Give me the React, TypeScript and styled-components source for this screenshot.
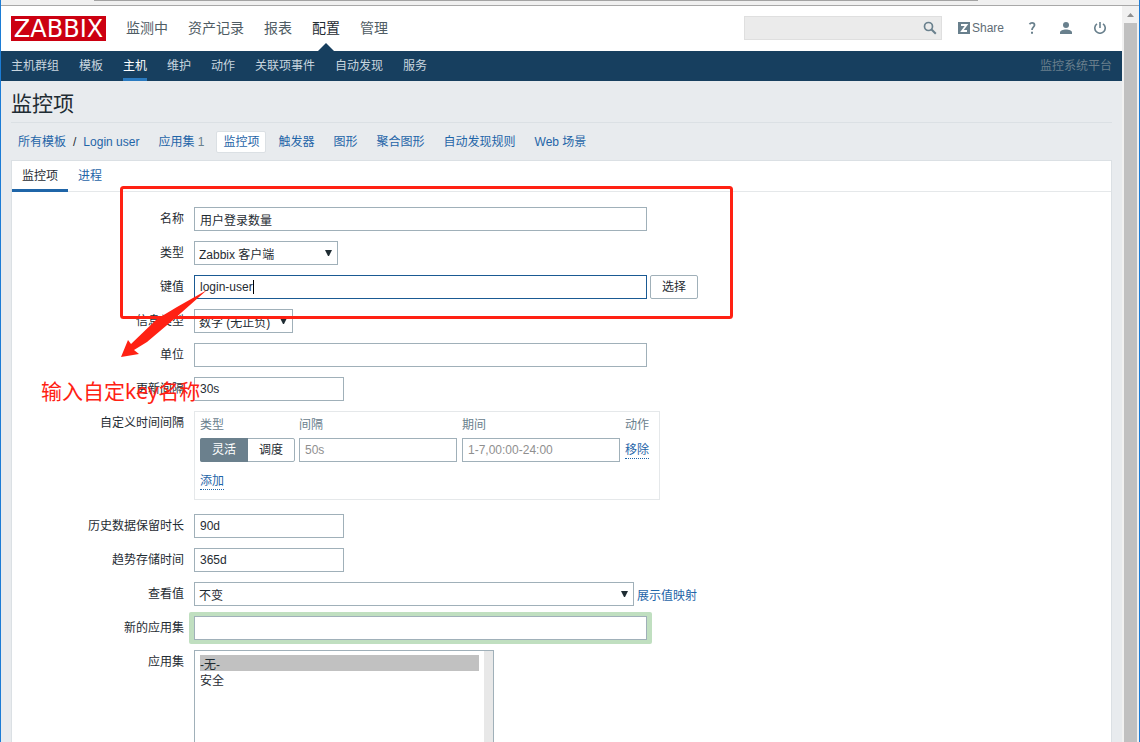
import React from 'react';
import styled, { createGlobalStyle, css } from 'styled-components';

const sans = `'Liberation Sans', 'Noto Sans CJK SC', sans-serif`;
const link = '#1f65a8';
const ink = '#1f2c33';
const muted = '#69808d';
const edge = '#a0b0b9';

const GlobalStyle = createGlobalStyle`
  *, *::before, *::after { box-sizing: border-box; }
  body { margin: 0; overflow: hidden; font: 12px/16px ${sans}; color: ${ink}; }
  input, select, button { font: inherit; color: inherit; }
  a { color: ${link}; text-decoration: none; }
`;

const Window = styled.div`
  position: relative;
  display: flex;
  flex-direction: column;
  height: 100vh;
  overflow: hidden;
  border: solid #1c7cd5;
  border-width: 0 1px;
  background: #e8ebee;
`;

const Chrome = styled.div`
  flex: none;
  height: 6px;
  padding: 0 161px 0 93px;
  background: #f0f0f0;
  border-bottom: 1px solid #a8a8a8;
  &::before { content: ''; display: block; height: 1px; background: #a3a3a3; }
`;

const Viewport = styled.div`
  display: flex;
  flex: 1;
  min-height: 0;
`;

const Page = styled.div`
  flex: 1;
  min-width: 0;
  overflow: hidden;
`;

const Scrollbar = styled.div`
  flex: none;
  display: flex;
  flex-direction: column;
  width: 17px;
  padding: 0 2px;
  background: #f1f1f1;
  svg { display: block; flex: none; margin: 6px 3px 5px; }
  &::after { content: ''; flex: 1; background: #c0c0c0; }
`;

const Header = styled.header`
  display: flex;
  align-items: flex-start;
  height: 45px;
  padding: 10px 16px 0 10px;
  background: #fff;
`;

const Logo = styled.a`
  width: 95px;
  height: 25px;
  background: #cc0011;
  color: #fff;
  font: 24px/27px 'DejaVu Sans', sans-serif;
  text-align: center;
`;

const MainMenu = styled.nav`
  display: flex;
  gap: 20px;
  height: 35px;
  margin-left: 20px;
  font-size: 14px;
  line-height: 25px;
`;

const MainLink = styled.a<{ $active?: boolean }>`
  position: relative;
  color: ${p => (p.$active ? ink : '#4f5c64')};
  ${p => p.$active && css`
    &::after {
      content: '';
      position: absolute;
      left: 50%;
      bottom: 0;
      margin-left: -8px;
      border: solid transparent;
      border-width: 0 8px 8px;
      border-bottom-color: #173f5f;
    }
  `}
`;

const Search = styled.form`
  display: flex;
  align-items: center;
  width: 198px;
  height: 24px;
  margin-left: auto;
  padding-right: 4px;
  background: #ebebeb;
  border: 1px solid #dfdfdf;
  input { flex: 1; min-width: 0; border: 0; background: none; outline: 0; }
`;

const IconButton = styled.button`
  display: block;
  padding: 0;
  border: 0;
  background: none;
  color: ${muted};
  svg { display: block; }
`;

const Tools = styled.div`
  display: flex;
  align-items: center;
  gap: 22px;
  height: 24px;
  margin-left: 16px;
`;

const Share = styled.a`
  display: flex;
  align-items: center;
  gap: 2px;
  color: #5f6d76;
`;

const SubMenu = styled.nav`
  display: flex;
  gap: 20px;
  height: 30px;
  padding: 0 10px;
  background: #173f5f;
  line-height: 31px;
`;

const SubLink = styled.a<{ $active?: boolean }>`
  height: 30px;
  color: ${p => (p.$active ? '#fff' : '#c9d6df')};
  border-bottom: 3px solid ${p => (p.$active ? '#2a7ac0' : 'transparent')};
`;

const ServerName = styled.span`
  margin-left: auto;
  color: #6a7f8d;
`;

const Main = styled.main`
  padding: 0 10px;
`;

const Title = styled.h1`
  margin: 0;
  padding: 8px 0 3px;
  border-bottom: 1px solid #dbe0e4;
  font-size: 21px;
  font-weight: 400;
  line-height: 30px;
`;

const Crumbs = styled.nav`
  display: flex;
  align-items: center;
  height: 37px;
  padding-left: 7px;
`;

const Slash = styled.span`
  padding: 0 7px;
`;

const Crumb = styled.a`
  margin-right: 19px;
`;

const ActiveCrumb = styled.a`
  margin: 0 12px 0 -7px;
  padding: 2px 6px;
  background: #fff;
  border: 1px solid #dbe0e4;
  border-radius: 2px;
`;

const Count = styled.sup`
  color: ${muted};
  font-size: 12px;
  line-height: 16px;
  vertical-align: baseline;
`;

const Panel = styled.section`
  background: #fff;
  border: 1px solid #dbe0e4;
`;

const Tabs = styled.div`
  display: flex;
  height: 31px;
  border-bottom: 1px solid #e5e8ea;
`;

const Tab = styled.a<{ $active?: boolean }>`
  height: 31px;
  padding: 0 10px;
  line-height: 31px;
  color: ${p => (p.$active ? ink : link)};
  border-bottom: 3px solid ${p => (p.$active ? '#1f65a8' : 'transparent')};
`;

const Form = styled.form`
  display: grid;
  gap: 10px;
  padding: 15px 0;
`;

const FieldRow = styled.div`
  display: grid;
  grid-template-columns: 172px 1fr;
  column-gap: 10px;
  align-items: start;
`;

const Label = styled.label`
  text-align: right;
  line-height: 24px;
`;

const Controls = styled.div`
  display: flex;
  align-items: center;
  gap: 3px;
`;

const SideLink = styled.a`
  padding-top: 3px;
`;

const TextBox = styled.input<{ $w: number; $focus?: boolean }>`
  display: block;
  width: ${p => p.$w}px;
  height: 24px;
  padding: 0 5px;
  border: 1px solid ${p => (p.$focus ? '#1a5a93' : edge)};
  border-radius: 0;
  background: #fff;
  outline: 0;
  &::placeholder { color: #8f8f8f; opacity: 1; }
`;

const KeyField = styled.div`
  position: relative;
`;

const Caret = styled.i`
  position: absolute;
  left: 59px;
  top: 5px;
  width: 1px;
  height: 14px;
  background: #000;
`;

const SelectBox = styled.div<{ $w: number }>`
  position: relative;
  width: ${p => p.$w}px;
  select {
    display: block;
    width: 100%;
    height: 24px;
    padding: 3px 20px 0 4px;
    appearance: none;
    border: 1px solid ${edge};
    border-radius: 0;
    background: #fff;
  }
  svg { position: absolute; right: 6px; top: 9px; pointer-events: none; }
`;

const Button = styled.button`
  width: 48px;
  height: 24px;
  padding: 0;
  border: 1px solid ${edge};
  border-radius: 2px;
  background: #fff;
`;

const IntervalBox = styled.div`
  width: 466px;
  height: 89px;
  margin-bottom: 4px;
  padding: 0 5px;
  border: 1px solid #e5e8ea;
`;

const IntervalTable = styled.table`
  border-collapse: collapse;
  table-layout: fixed;
  width: 100%;
  th, td { padding: 0; text-align: left; font-weight: 400; }
  th { height: 26px; color: ${muted}; }
  col:nth-child(1) { width: 99px; }
  col:nth-child(2), col:nth-child(3) { width: 163px; }
`;

const ActionLink = styled.a`
  display: inline-block;
  line-height: 15px;
  border-bottom: 1px dotted ${link};
`;

const AddRow = styled.div`
  padding-top: 11px;
`;

const Segments = styled.div`
  display: grid;
  grid-template-columns: 47px 46px;
  width: 95px;
  border: 1px solid ${edge};
  border-radius: 2px;
`;

const Segment = styled.label`
  line-height: 22px;
  text-align: center;
  input { position: absolute; opacity: 0; }
  &:has(input:checked) {
    margin: -1px 0 -1px -1px;
    line-height: 24px;
    border-radius: 2px 0 0 2px;
    background: #6b808d;
    color: #fff;
  }
`;

const Highlight = styled.div`
  margin: -4px -5px;
  padding: 4px 5px;
  border-radius: 2px;
  background: #c0dfc0;
`;

const ListBox = styled.select`
  width: 300px;
  height: 140px;
  padding: 4px 14px 4px 5px;
  border: 1px solid ${edge};
  border-radius: 0;
  overflow: hidden;
  outline: 0;
  background: linear-gradient(#e8e8e8, #e8e8e8) right / 9px 100% no-repeat #fff;
  option { height: 16px; min-height: 16px; padding: 0; line-height: 16px; }
  option:checked { background: linear-gradient(#c1c1c1, #c1c1c1); color: ${ink}; }
`;

const Markup = styled.svg`
  position: absolute;
  left: 0;
  top: 0;
  pointer-events: none;
`;

const Note = styled.p`
  position: absolute;
  left: 40px;
  top: 376px;
  margin: 0;
  color: #ff2113;
  font: 21px/30px 'Noto Sans', 'Noto Sans CJK SC', sans-serif;
`;

const mainMenu = ['监测中', '资产记录', '报表', '配置', '管理'];
const subMenu = ['主机群组', '模板', '主机', '维护', '动作', '关联项事件', '自动发现', '服务'];
const crumbs = ['触发器', '图形', '聚合图形', '自动发现规则', 'Web 场景'];

function Select({ id, width, value }: { id: string; width: number; value: string }) {
  return (
    <SelectBox $w={width}>
      <select id={id}><option>{value}</option></select>
      <svg width="7" height="6" aria-hidden="true"><path d="M0 0h7L4 6H3z" fill={ink} /></svg>
    </SelectBox>
  );
}

function Field({ id, label, children }: { id: string; label: string; children: React.ReactNode }) {
  return (
    <FieldRow>
      <Label htmlFor={id}>{label}</Label>
      <Controls>{children}</Controls>
    </FieldRow>
  );
}

export default function App() {
  return (
    <Window>
      <GlobalStyle />
      <Chrome />
      <Viewport>
        <Page>
          <Header>
            <Logo href="#">ZABBIX</Logo>
            <MainMenu>
              {mainMenu.map(t => <MainLink key={t} href="#" $active={t === '配置'}>{t}</MainLink>)}
            </MainMenu>
            <Search>
              <input type="text" aria-label="搜索" />
              <IconButton type="button" aria-label="搜索">
                <svg width="14" height="14" viewBox="0 0 14 14" fill="none" stroke="currentColor">
                  <circle cx="5.500" cy="5.500" r="4" strokeWidth="1.700" />
                  <path d="M8.500 8.500l4.300 4.300" strokeWidth="2" />
                </svg>
              </IconButton>
            </Search>
            <Tools>
              <Share href="#">
                <svg width="12" height="12" viewBox="0 0 12 12" aria-hidden="true">
                  <path d="M0 0h12v12H0z" fill={muted} />
                  <path d="M3 3h5.500L4 9h5" fill="none" stroke="#fff" strokeWidth="1.800" />
                </svg>
                Share
              </Share>
              <IconButton aria-label="帮助">
                <svg width="12" height="14" viewBox="0 0 12 14" fill="none" stroke="currentColor" strokeWidth="1.800">
                  <path d="M3.500 3.200C4.200 2.200 5 1.900 6 1.900c1.600 0 2.500.8 2.500 2.200C8.500 6.200 6 6.300 6 9" />
                  <path d="M6 10.800v2" strokeWidth="2" />
                </svg>
              </IconButton>
              <IconButton aria-label="用户">
                <svg width="12" height="12" viewBox="0 0 12 12" fill="currentColor">
                  <circle cx="6" cy="3" r="3" />
                  <path d="M0 12v-1.500C0 8.500 3 7.500 6 7.500s6 1 6 3V12z" />
                </svg>
              </IconButton>
              <IconButton aria-label="退出">
                <svg width="12" height="12" viewBox="0 0 12 12" fill="none" stroke="currentColor" strokeWidth="1.600">
                  <path d="M3 1.800a5.200 5.200 0 1 0 6 0" />
                  <path d="M6 0v6" />
                </svg>
              </IconButton>
            </Tools>
          </Header>
          <SubMenu>
            {subMenu.map(t => <SubLink key={t} href="#" $active={t === '主机'}>{t}</SubLink>)}
            <ServerName>监控系统平台</ServerName>
          </SubMenu>
          <Main>
            <Title>监控项</Title>
            <Crumbs>
              <a href="#">所有模板</a>
              <Slash>/</Slash>
              <Crumb href="#">Login user</Crumb>
              <Crumb href="#">应用集 <Count>1</Count></Crumb>
              <ActiveCrumb href="#">监控项</ActiveCrumb>
              {crumbs.map(t => <Crumb key={t} href="#">{t}</Crumb>)}
            </Crumbs>
            <Panel>
              <Tabs>
                <Tab href="#" $active>监控项</Tab>
                <Tab href="#">进程</Tab>
              </Tabs>
              <Form>
                <Field id="name" label="名称">
                  <TextBox id="name" $w={453} defaultValue="用户登录数量" />
                </Field>
                <Field id="type" label="类型">
                  <Select id="type" width={144} value="Zabbix 客户端" />
                </Field>
                <Field id="key" label="键值">
                  <KeyField>
                    <TextBox id="key" $w={453} $focus defaultValue="login-user" />
                    <Caret />
                  </KeyField>
                  <Button type="button">选择</Button>
                </Field>
                <Field id="value-type" label="信息类型">
                  <Select id="value-type" width={99} value="数字 (无正负)" />
                </Field>
                <Field id="units" label="单位">
                  <TextBox id="units" $w={453} />
                </Field>
                <Field id="delay" label="更新间隔">
                  <TextBox id="delay" $w={150} defaultValue="30s" />
                </Field>
                <Field id="flex-delay" label="自定义时间间隔">
                  <IntervalBox>
                    <IntervalTable>
                      <colgroup><col /><col /><col /><col /></colgroup>
                      <thead>
                        <tr><th>类型</th><th>间隔</th><th>期间</th><th>动作</th></tr>
                      </thead>
                      <tbody>
                        <tr>
                          <td>
                            <Segments>
                              <Segment><input type="radio" name="mode" defaultChecked />灵活</Segment>
                              <Segment><input type="radio" name="mode" />调度</Segment>
                            </Segments>
                          </td>
                          <td><TextBox id="flex-delay" $w={158} placeholder="50s" /></td>
                          <td><TextBox $w={158} aria-label="期间" placeholder="1-7,00:00-24:00" /></td>
                          <td><ActionLink href="#">移除</ActionLink></td>
                        </tr>
                      </tbody>
                    </IntervalTable>
                    <AddRow><ActionLink href="#">添加</ActionLink></AddRow>
                  </IntervalBox>
                </Field>
                <Field id="history" label="历史数据保留时长">
                  <TextBox id="history" $w={150} defaultValue="90d" />
                </Field>
                <Field id="trends" label="趋势存储时间">
                  <TextBox id="trends" $w={150} defaultValue="365d" />
                </Field>
                <Field id="valuemap" label="查看值">
                  <Select id="valuemap" width={440} value="不变" />
                  <SideLink href="#">展示值映射</SideLink>
                </Field>
                <Field id="new-app" label="新的应用集">
                  <Highlight><TextBox id="new-app" $w={453} /></Highlight>
                </Field>
                <Field id="apps" label="应用集">
                  <ListBox id="apps" multiple defaultValue={['0']}>
                    <option value="0">-无-</option>
                    <option value="1">安全</option>
                  </ListBox>
                </Field>
              </Form>
            </Panel>
          </Main>
        </Page>
        <Scrollbar>
          <svg width="7" height="6" aria-hidden="true"><path d="M0 5l3.500-4L7 5z" fill="#8f8f8f" /></svg>
        </Scrollbar>
      </Viewport>
      <Markup width="740" height="370" aria-hidden="true">
        <rect x="120.500" y="187.500" width="610" height="130" rx="2" fill="none" stroke="#ff2113" strokeWidth="3" />
        <path d="M206 290L176 307L156 319L130 344L127 340L120 357L138 354L133 350L146 342L172 320Z" fill="#ff2113" />
      </Markup>
      <Note>输入自定key名称</Note>
    </Window>
  );
}
